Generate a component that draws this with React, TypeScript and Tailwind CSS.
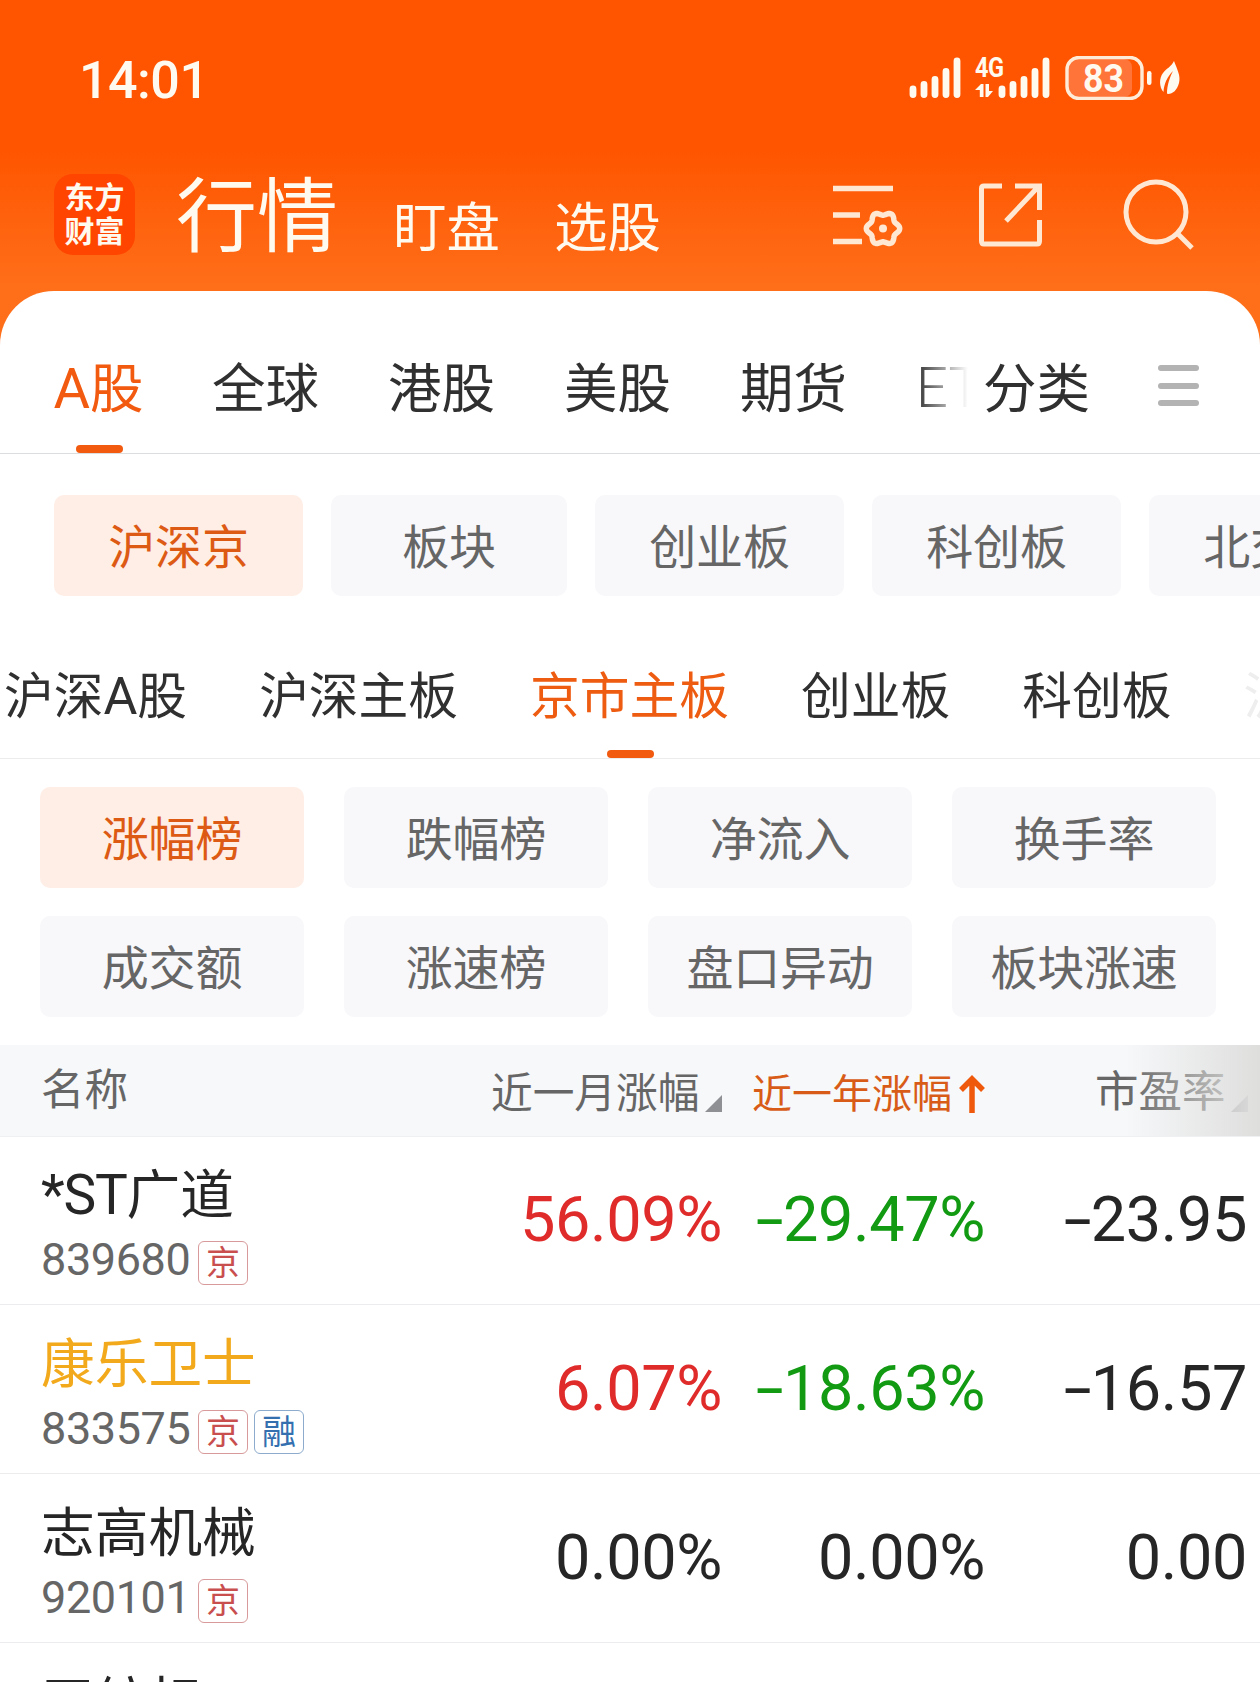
import clsx from 'clsx';

interface Tab {
  label: string;
  active?: boolean;
}

interface Stock {
  prefix?: string;
  name: string;
  code: string;
  tags: string[];
  month: string;
  year: string;
  pe: string;
  highlighted?: boolean;
}

const MARKET_TABS: Tab[] = [
  { label: '全球' },
  { label: '港股' },
  { label: '美股' },
  { label: '期货' },
];

const BOARD_CHIPS = [
  { label: '沪深京', width: 'w-[249px]', active: true },
  { label: '板块', width: 'w-[236px]' },
  { label: '创业板', width: 'w-[249px]' },
  { label: '科创板', width: 'w-[249px]' },
  { label: '北交所', width: 'w-[249px]' },
];

const RANK_CHIPS: Tab[] = [
  { label: '涨幅榜', active: true },
  { label: '跌幅榜' },
  { label: '净流入' },
  { label: '换手率' },
  { label: '成交额' },
  { label: '涨速榜' },
  { label: '盘口异动' },
  { label: '板块涨速' },
];

const STOCKS: Stock[] = [
  { prefix: '*ST', name: '广道', code: '839680', tags: ['京'], month: '56.09%', year: '-29.47%', pe: '-23.95' },
  { name: '康乐卫士', code: '833575', tags: ['京', '融'], month: '6.07%', year: '-18.63%', pe: '-16.57', highlighted: true },
  { name: '志高机械', code: '920101', tags: ['京'], month: '0.00%', year: '0.00%', pe: '0.00' },
  { name: '天纺标', code: '871753', tags: ['京'], month: '0.00%', year: '0.00%', pe: '0.00' },
];

// Six-lobed outline of the settings gear
const GEAR_POINTS = Array.from({ length: 120 }, (_, i) => {
  const angle = (i / 120) * Math.PI * 2;
  const radius = 15 + 1.7 * Math.cos(angle * 6);
  return `${(50 + radius * Math.cos(angle)).toFixed(2)},${(50.5 + radius * Math.sin(angle)).toFixed(2)}`;
}).join(' ');

function SignalBars() {
  return (
    <svg className="h-[42px] w-[52px]" viewBox="0 0 52 42" stroke="#fffaf0" strokeWidth="6.8" strokeLinecap="round">
      <path d="M4 33V38.500M15 28.500V38.500M26 23.500V38.500M37 15.500V38.500M48 5V38.500" />
    </svg>
  );
}

function StatusBar() {
  return (
    <div className="flex h-[158px] items-start justify-between pl-[79px] pr-[78px] pt-[56px] text-[#fffaf0]">
      <span className="font-['Roboto',sans-serif] text-[52px] font-medium leading-[50px] tracking-[-0.5px]">14:01</span>
      <div className="flex items-start">
        <div className="mr-[14px]">
          <SignalBars />
        </div>
        <div className="relative -mr-[1px] h-[42px] w-[24px]">
          <span className="absolute left-0 top-[2px] origin-left scale-x-[0.84] font-['Roboto',sans-serif] text-[28px] font-bold leading-[20px] tracking-[-0.5px]">
            4G
          </span>
          <svg className="absolute left-0 top-[28px] h-[14px] w-[18px]" viewBox="0 0 18 14" fill="#fffaf0">
            <path d="M0 6L6 0H8.500V13H4.800V6ZM10.500 0H14V7H18L13 13H10.500Z" />
          </svg>
        </div>
        <SignalBars />
        <svg className="ml-[12px] h-[44px] w-[120px]" viewBox="0 0 120 44">
          <rect x="6" y="3" width="64" height="38" rx="8" fill="#ff7438" />
          <rect x="5" y="1.500" width="75" height="41" rx="12" fill="none" stroke="#ffecd8" strokeWidth="3.400" />
          <text x="41.500" y="35.500" textAnchor="middle" fill="#fffaf0" fontFamily="Roboto, sans-serif" fontWeight="700" fontSize="38" textLength="41" lengthAdjust="spacingAndGlyphs">83</text>
          <rect x="85" y="15" width="4.500" height="14" rx="2.200" fill="#fffaf0" />
          <path d="M112 5C115 13 119 20 117 27C115 34 111 38 106 38L105 37.500C105 29 108 21 111 15C105 21 102 28 101.500 36C97 31 97 22 101 17C105 12 109 11 112 5Z" fill="#fffaf0" />
        </svg>
      </div>
    </div>
  );
}

function AppHeader() {
  return (
    <div className="flex h-[133px] items-start pl-[54px] pr-[65px] text-[#fffaf0]">
      <div className="mt-[16px] flex h-[81px] w-[81px] flex-col items-center rounded-[19px] bg-[#ff4500] pt-[4px] text-[30px] font-bold leading-[34px]">
        <span>东方</span>
        <span>财富</span>
      </div>
      <span className="ml-[41px] mt-[8px] text-[81px] leading-[88px]">行情</span>
      <span className="ml-[55px] mt-[38px] text-[53.500px] leading-[56px]">盯盘</span>
      <span className="ml-[54px] mt-[38px] text-[53.500px] leading-[56px]">选股</span>
      <svg className="ml-auto mt-[20px] h-[72px] w-[72px]" viewBox="0 0 72 72" fill="none" stroke="#ffe8d3" strokeWidth="5.500">
        <path d="M0 10.500H60M0 37H27M0 63.500H29" />
        <polygon points={GEAR_POINTS} strokeLinejoin="round" />
        <circle cx="50" cy="50.500" r="4" fill="#ffe8d3" stroke="none" />
      </svg>
      <svg className="ml-[72px] mt-[20px] h-[72px] w-[72px]" viewBox="0 0 72 72" fill="none" stroke="#ffe8d3" strokeWidth="5">
        <path d="M25 8H7Q4.500 8 4.500 10.500V63Q4.500 66 7 66H60Q62.500 66 62.500 63V42M38 8H62.500V32M62 8L29 43" />
      </svg>
      <svg className="ml-[72px] mt-[20px] h-[74px] w-[74px]" viewBox="0 0 74 74" fill="none" stroke="#ffe8d3" strokeWidth="5">
        <circle cx="35" cy="34" r="30" />
        <path d="M55 54L71 70" />
      </svg>
    </div>
  );
}

function MarketTabs() {
  return (
    <div className="flex h-[163px] items-start border-b border-[#dcdddf] pl-[54px] text-[53.500px] leading-[60px] text-[#303030]">
      <div className="relative mt-[64px] flex h-[98px] w-[89px] justify-center text-[#f25a10]">
        <span className="whitespace-nowrap">
          <span className="font-['Roboto',sans-serif] text-[56px]">A</span>股
        </span>
        <span className="absolute bottom-0 left-[22px] h-[8px] w-[47px] rounded-full bg-[#f25a10]" />
      </div>
      <div className="ml-[69px] mt-[64px] flex gap-[69px]">
        {MARKET_TABS.map((tab) => (
          <span key={tab.label}>{tab.label}</span>
        ))}
      </div>
      <div className="relative ml-[69px] mt-[67px] w-[52px] overflow-hidden whitespace-nowrap font-['Roboto',sans-serif] text-[56px] font-light">
        ETF
        <span className="absolute inset-0 bg-gradient-to-r from-white/0 to-white" />
      </div>
      <span className="ml-[15px] mt-[64px]">分类</span>
      <div className="ml-[68px] mt-[74px] flex flex-col gap-[11.500px]">
        <span className="h-[6px] w-[41px] rounded-full bg-[#b3b3b3]" />
        <span className="h-[6px] w-[41px] rounded-full bg-[#b3b3b3]" />
        <span className="h-[6px] w-[41px] rounded-full bg-[#b3b3b3]" />
      </div>
    </div>
  );
}

function Chip({ label, active, className }: { label: string; active?: boolean; className?: string }) {
  return (
    <div
      className={clsx(
        'flex h-[101px] shrink-0 items-center justify-center rounded-[10px] pb-[3px] text-[47px] leading-[60px]',
        active ? 'bg-[#ffeee6] text-[#dc5a14]' : 'bg-[#f8f8fb] text-[#666666]',
        className,
      )}
    >
      <span className="whitespace-nowrap tracking-[-0.2px]">{label}</span>
    </div>
  );
}

function BoardTabs() {
  return (
    <div className="relative flex h-[163px] items-start gap-[72.200px] overflow-hidden whitespace-nowrap border-b border-[#ececee] pl-[4px] pt-[66px] text-[49.700px] leading-[60px] text-[#303030]">
      <span className="w-[184.500px]">
        沪深<span className="font-['Roboto',sans-serif] text-[52px]">A</span>股
      </span>
      <span>沪深主板</span>
      <div className="relative h-[96px] text-[#ee5c12]">
        京市主板
        <span className="absolute bottom-0 left-[77px] h-[8px] w-[47px] rounded-full bg-[#f25a10]" />
      </div>
      <span>创业板</span>
      <span>科创板</span>
      <span className="text-[#eeeeee]">沪股通</span>
    </div>
  );
}

function TableHeader() {
  return (
    <div className="relative flex h-[92px] items-start border-b border-[#eef0f2] bg-[#f7f8fa] pl-[41px] leading-[50px] text-[#666666]">
      <span className="mt-[17px] w-[450px] text-[43.500px]">名称</span>
      <div className="mt-[20px] flex w-[231px] items-start text-[41.700px]">
        <span className="whitespace-nowrap">近一月涨幅</span>
        <svg className="ml-auto mt-[30px] h-[17px] w-[17px] shrink-0" viewBox="0 0 17 17" fill="#8f9094">
          <path d="M17 0V17H0Z" />
        </svg>
      </div>
      <div className="ml-[30px] mt-[21px] flex w-[233px] items-start text-[40px] text-[#d85c17]">
        <span className="whitespace-nowrap">近一年涨幅</span>
        <svg className="ml-auto mt-[9px] h-[38px] w-[26px] shrink-0" viewBox="0 0 26 38" fill="none" stroke="#ee590b" strokeWidth="5.500">
          <path d="M13 38V5M2 15L13 4L24 15" />
        </svg>
      </div>
      <div className="ml-[110px] mt-[19px] flex w-[153px] items-start text-[43.500px]">
        <span className="whitespace-nowrap">市盈率</span>
        <svg className="ml-auto mt-[31px] h-[17px] w-[17px] shrink-0" viewBox="0 0 17 17" fill="#8f9094">
          <path d="M17 0V17H0Z" />
        </svg>
      </div>
      <div className="absolute right-0 top-0 h-[91px] w-[135px] bg-gradient-to-r from-[#dededd]/0 via-[#dededd]/50 to-[#dededd]" />
    </div>
  );
}

function Value({ value, className, colored }: { value: string; className: string; colored?: boolean }) {
  const isNegative = value.startsWith('-');
  const isZero = parseFloat(value) === 0;
  const color = !colored || isZero ? 'text-[#262626]' : isNegative ? 'text-[#129a12]' : 'text-[#e02b2b]';
  return (
    <span
      className={clsx(
        "whitespace-nowrap pt-[49px] text-right font-['Roboto',sans-serif] text-[63px] leading-[70px] tracking-[-0.4px]",
        color,
        className,
      )}
    >
      {isNegative && <span className="inline-block origin-right scale-x-[1.6]">-</span>}
      {isNegative ? value.slice(1) : value}
    </span>
  );
}

function StockRow({ stock }: { stock: Stock }) {
  return (
    <div className="flex h-[169px] items-start border-b border-[#ececee]">
      <div className="w-[460px] pl-[41px] pt-[25px]">
        <div className={clsx('h-[60px] whitespace-nowrap text-[53.700px] leading-[60px]', stock.highlighted ? 'text-[#f2aa1c]' : 'text-[#262626]')}>
          {stock.prefix && <span className="font-['Roboto',sans-serif] text-[55px] tracking-[-1.2px]">{stock.prefix}</span>}
          {stock.name}
        </div>
        <div className="mt-[20px] flex h-[44px] items-start">
          <span className="w-[157px] whitespace-nowrap font-['Roboto',sans-serif] text-[45px] leading-[38px] tracking-[-0.4px] text-[#666666]">
            {stock.code}
          </span>
          {stock.tags.map((tag) => (
            <span
              key={tag}
              className={clsx(
                'mr-[6px] flex h-[44px] w-[50px] items-center justify-center rounded-[6px] border-[1.500px] pb-[5px] text-[34px] leading-[34px]',
                tag === '京' ? 'border-[#d89a9a] text-[#c94f4f]' : 'border-[#8cabcd] text-[#346fb0]',
              )}
            >
              {tag}
            </span>
          ))}
        </div>
      </div>
      <Value className="w-[262px]" value={stock.month} colored />
      <Value className="w-[263px]" value={stock.year} colored />
      <Value className="w-[262px]" value={stock.pe} />
    </div>
  );
}

export default function App() {
  return (
    <div className="h-[1682px] w-[1260px] overflow-hidden bg-[linear-gradient(180deg,#ff5500_0px,#ff5500_150px,#ff6f1a_291px,#ff6f1a_400px)] font-['Noto_Sans_CJK_SC',sans-serif]">
      <StatusBar />
      <AppHeader />
      <div className="rounded-t-[54px] bg-white">
        <MarketTabs />
        <div className="flex gap-[28px] overflow-hidden pl-[54px] pt-[41px]">
          {BOARD_CHIPS.map((chip) => (
            <Chip key={chip.label} label={chip.label} active={chip.active} className={chip.width} />
          ))}
        </div>
        <BoardTabs />
        <div className="grid grid-cols-4 gap-x-[40px] gap-y-[28px] pb-[28px] pl-[40px] pr-[44px] pt-[28px]">
          {RANK_CHIPS.map((chip) => (
            <Chip key={chip.label} label={chip.label} active={chip.active} />
          ))}
        </div>
        <TableHeader />
        <div className="-mt-[1px]">
          {STOCKS.map((stock) => (
            <StockRow key={stock.code} stock={stock} />
          ))}
        </div>
      </div>
    </div>
  );
}
